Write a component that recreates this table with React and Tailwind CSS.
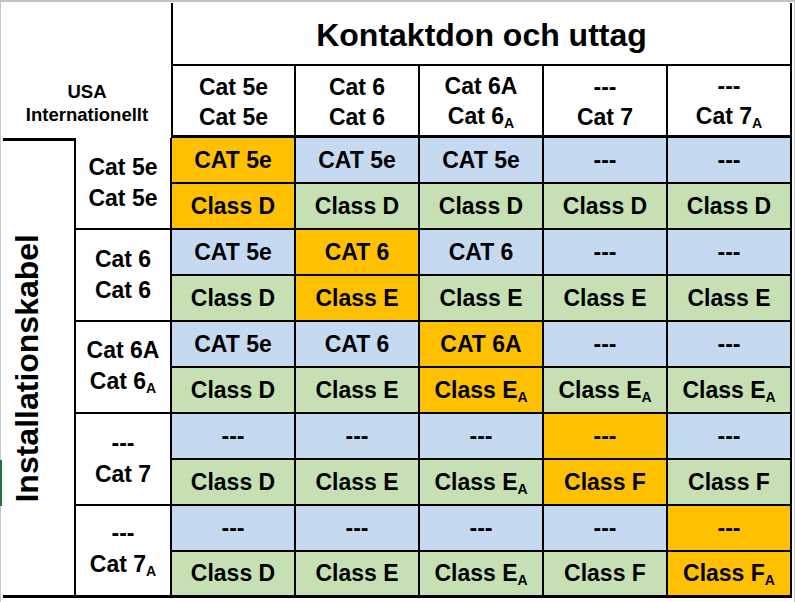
import React from 'react';

const ORANGE = 'bg-[#ffc000]';
const BLUE = 'bg-[#c5d9f1]';
const GREEN = 'bg-[#c6e0b4]';

const colHeads = [
  ['Cat 5e', 'Cat 5e'],
  ['Cat 6', 'Cat 6'],
  ['Cat 6A', 'Cat 6_A'],
  ['---', 'Cat 7'],
  ['---', 'Cat 7_A'],
];

const groups = [
  {
    head: ['Cat 5e', 'Cat 5e'],
    cat: ['CAT 5e', 'CAT 5e', 'CAT 5e', '---', '---'],
    cls: ['Class D', 'Class D', 'Class D', 'Class D', 'Class D'],
  },
  {
    head: ['Cat 6', 'Cat 6'],
    cat: ['CAT 5e', 'CAT 6', 'CAT 6', '---', '---'],
    cls: ['Class D', 'Class E', 'Class E', 'Class E', 'Class E'],
  },
  {
    head: ['Cat 6A', 'Cat 6_A'],
    cat: ['CAT 5e', 'CAT 6', 'CAT 6A', '---', '---'],
    cls: ['Class D', 'Class E', 'Class E_A', 'Class E_A', 'Class E_A'],
  },
  {
    head: ['---', 'Cat 7'],
    cat: ['---', '---', '---', '---', '---'],
    cls: ['Class D', 'Class E', 'Class E_A', 'Class F', 'Class F'],
  },
  {
    head: ['---', 'Cat 7_A'],
    cat: ['---', '---', '---', '---', '---'],
    cls: ['Class D', 'Class E', 'Class E_A', 'Class F', 'Class F_A'],
  },
];

// "Cat 7_A" -> Cat 7 with subscript A
function Label({ text }) {
  if (text.endsWith('_A')) {
    return (
      <span>
        {text.slice(0, -2)}
        <span className="relative top-[4px] text-[14px]">A</span>
      </span>
    );
  }
  return <span>{text}</span>;
}

export default function App() {
  return (
    <div
      className="relative w-[795px] h-[602px] overflow-hidden bg-white border-t-2 border-r border-[#c4c4c4] text-black font-bold pl-[2px] pt-[1px]"
      style={{ fontFamily: '"Liberation Sans", Arial, sans-serif' }}
    >
      {/* sheet edge gridline + selected row marker */}
      <div className="absolute left-0 top-0 bottom-0 z-10 w-[3px] bg-white border-l-[1.5px] border-[#c4c4c4]" />
      <div className="absolute left-0 top-[458px] z-20 w-[2px] h-[46px] bg-[#217346]" />

      <div className="grid grid-cols-[74px_96px_repeat(5,124px)] grid-rows-[63px_72px_repeat(10,46px)]">
        <div className="col-span-2 row-span-2 flex flex-col items-center justify-end pb-[12px] text-[18.5px] leading-[23px]">
          <span>USA</span>
          <span>Internationellt</span>
        </div>

        <div className="col-span-5 flex items-center justify-center border-x-2 border-b-2 border-black text-[32px] pt-[3px] -ml-[1px]">
          Kontaktdon och uttag
        </div>

        {colHeads.map((h, i) => (
          <div
            key={i}
            className={`flex flex-col items-center justify-center pt-[3px] border-r-2 border-b-[3px] border-black text-[23px] leading-[30px] ${i === 0 ? 'border-l-2 -ml-[1px]' : ''}`}
          >
            <Label text={h[0]} />
            <Label text={h[1]} />
          </div>
        ))}

        <div className="row-span-10 flex items-center justify-start pl-[7px] border-t-[3px] border-r-2 border-b-[3px] border-black">
          <span className="[writing-mode:vertical-rl] rotate-180 text-[32px] leading-[36px] whitespace-nowrap">
            Installationskabel
          </span>
        </div>

        {groups.map((g, gi) => (
          <React.Fragment key={gi}>
            <div className={`row-span-2 flex flex-col items-center justify-center border-r-2 border-black text-[23px] leading-[31px] ${gi === 4 ? 'border-b-[3px]' : 'border-b-2'}`}>
              <Label text={g.head[0]} />
              <Label text={g.head[1]} />
            </div>
            {g.cat.map((t, ci) => (
              <div
                key={'c' + ci}
                className={`flex items-center justify-center border-r-2 border-b-2 border-black text-[23px] ${ci === gi ? ORANGE : BLUE}`}
              >
                <Label text={t} />
              </div>
            ))}
            {g.cls.map((t, ci) => (
              <div
                key={'k' + ci}
                className={`flex items-center justify-center border-r-2 border-black text-[23px] ${gi === 4 ? 'border-b-[3px]' : 'border-b-2'} ${ci === gi ? ORANGE : GREEN}`}
              >
                <Label text={t} />
              </div>
            ))}
          </React.Fragment>
        ))}
      </div>
    </div>
  );
}
